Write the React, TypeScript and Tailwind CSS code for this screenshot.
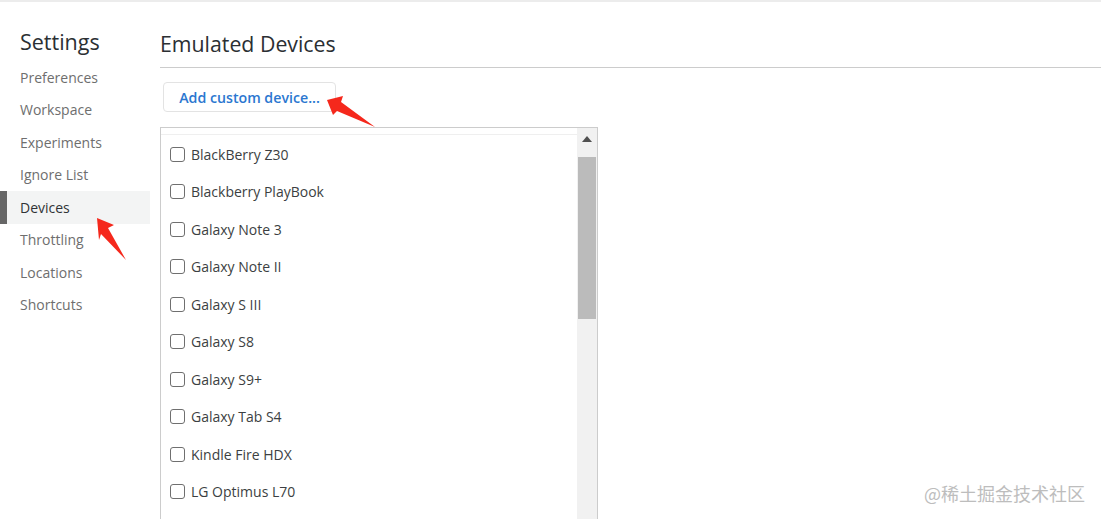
const navItems = [
  'Preferences',
  'Workspace',
  'Experiments',
  'Ignore List',
  'Devices',
  'Throttling',
  'Locations',
  'Shortcuts',
];

const devices = [
  'BlackBerry Z30',
  'Blackberry PlayBook',
  'Galaxy Note 3',
  'Galaxy Note II',
  'Galaxy S III',
  'Galaxy S8',
  'Galaxy S9+',
  'Galaxy Tab S4',
  'Kindle Fire HDX',
  'LG Optimus L70',
];

const Sidebar = () => (
  <nav className="flex w-[160px] shrink-0 flex-col">
    <h1 className="mb-[3px] mt-[24px] pl-[20px] text-[21.5px] leading-[32px] text-[#2b2f33]">
      Settings
    </h1>
    <ul className="flex flex-col">
      {navItems.map((item) =>
        item === 'Devices' ? (
          <li
            key={item}
            className="flex h-[32.5px] w-[150px] items-center border-l-[7px] border-[#666666] bg-[#f3f4f4] pl-[13px] text-[14px] text-[#303336]"
          >
            {item}
          </li>
        ) : (
          <li
            key={item}
            className="flex h-[32.5px] w-[150px] items-center pl-[20px] text-[14px] text-[#6e6e6e]"
          >
            {item}
          </li>
        ),
      )}
    </ul>
  </nav>
);

const DeviceRow = ({ name }: { name: string }) => (
  <div className="flex h-[37.5px] shrink-0 items-center pl-[9px]">
    <span className="h-[15px] w-[15px] rounded-[3px] border-[1.5px] border-[#6f6f6f] bg-white" />
    <span className="ml-[6px] text-[14px] text-[#3c3f42]">{name}</span>
  </div>
);

const DeviceList = () => (
  <div className="mt-[15px] flex h-[400px] w-[438px] border border-[#cccccc]">
    <div className="flex flex-1 flex-col">
      <div className="mt-[6px] border-t border-[#efefef]" />
      <div className="pt-[0.5px]">
        {devices.map((name) => (
          <DeviceRow key={name} name={name} />
        ))}
      </div>
    </div>
    <div className="flex w-[20px] flex-col items-center bg-[#f1f1f1]">
      <svg width="10" height="6" viewBox="0 0 10 6" className="mt-[8px]">
        <path d="M5 0 L10 6 L0 6 Z" fill="#505050" />
      </svg>
      <div className="mt-[15px] h-[162px] w-[18px] bg-[#bbbbbb]" />
    </div>
  </div>
);

const RedArrow = ({ points, className }: { points: string; className: string }) => (
  <svg width="60" height="60" viewBox="0 0 60 60" className={className}>
    <polygon points={points} fill="#f5281c" />
  </svg>
);

export default function App() {
  return (
    <div
      className="relative flex h-[519px] w-[1101px] overflow-hidden border-t-2 border-[#ececec] bg-white"
      style={{ fontFamily: '"Open Sans", "Noto Sans", sans-serif' }}
    >
      <Sidebar />
      <main className="flex-1">
        <h2 className="mt-[26px] text-[21.3px] leading-[32px] text-[#2b2f33]">Emulated Devices</h2>
        <div className="mt-[7px] border-t border-[#cccccc]" />
        <button className="ml-[3px] mt-[14px] block h-[30px] w-[173px] rounded-[4px] border border-[#e3e3e3] bg-white pt-[2px] text-center text-[14.2px] font-semibold text-[#2b77d0]">
          Add custom device...
        </button>
        <DeviceList />
      </main>

      {/* annotation arrows */}
      <RedArrow
        className="absolute left-[90px] top-[212px]"
        points="7,4 24,11 18,14 36,46 11,20 9,26"
      />
      <RedArrow
        className="absolute left-[323px] top-[94px]"
        points="4,4 20,0 18,6 52,31 14,15 10,19"
      />

      <span
        className="absolute left-[924px] top-[479px] text-[18px] leading-[24px] text-[#bdbdbd]"
        style={{ fontFamily: '"Noto Sans CJK SC", sans-serif' }}
      >
        @稀土掘金技术社区
      </span>
    </div>
  );
}
